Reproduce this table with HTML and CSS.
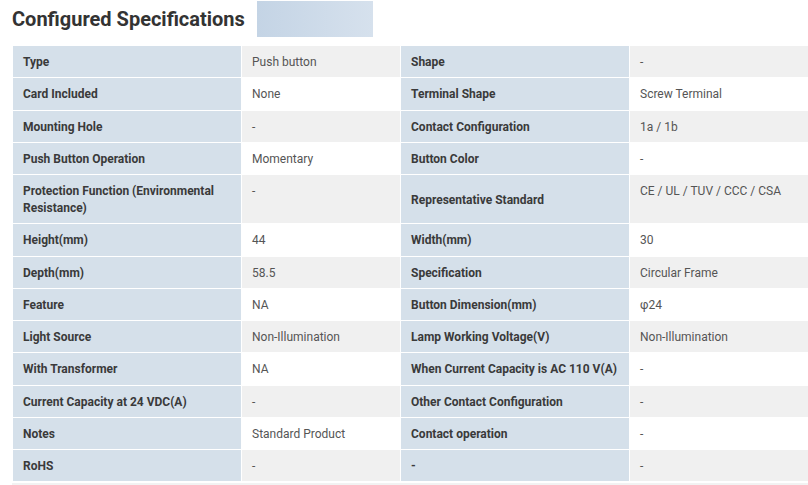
FILE: index.html
```html
<!DOCTYPE html>
<html>
<head>
<meta charset="utf-8">
<link rel="stylesheet" href="styles.css">
</head>
<body>
<div class="page">
  <div class="head">
    <h2 class="title">Configured Specifications</h2>
    <div class="tag"></div>
  </div>
  <table class="spec">
    <colgroup><col class="c1"><col class="c2"><col class="c3"><col class="c4"></colgroup>
    <tr class="odd"><th>Type</th><td>Push button</td><th>Shape</th><td>-</td></tr>
    <tr><th>Card Included</th><td>None</td><th>Terminal Shape</th><td>Screw Terminal</td></tr>
    <tr class="odd"><th>Mounting Hole</th><td>-</td><th>Contact Configuration</th><td>1a / 1b</td></tr>
    <tr><th>Push Button Operation</th><td>Momentary</td><th>Button Color</th><td>-</td></tr>
    <tr class="odd"><th>Protection Function (Environmental Resistance)</th><td>-</td><th>Representative Standard</th><td>CE / UL / TUV / CCC / CSA</td></tr>
    <tr><th>Height(mm)</th><td>44</td><th>Width(mm)</th><td>30</td></tr>
    <tr class="odd"><th>Depth(mm)</th><td>58.5</td><th>Specification</th><td>Circular Frame</td></tr>
    <tr><th>Feature</th><td>NA</td><th>Button Dimension(mm)</th><td>φ24</td></tr>
    <tr class="odd"><th>Light Source</th><td>Non-Illumination</td><th>Lamp Working Voltage(V)</th><td>Non-Illumination</td></tr>
    <tr><th>With Transformer</th><td>NA</td><th>When Current Capacity is AC 110 V(A)</th><td>-</td></tr>
    <tr class="odd"><th>Current Capacity at 24 VDC(A)</th><td>-</td><th>Other Contact Configuration</th><td>-</td></tr>
    <tr><th>Notes</th><td>Standard Product</td><th>Contact operation</th><td>-</td></tr>
    <tr class="odd"><th>RoHS</th><td>-</td><th>-</th><td>-</td></tr>
  </table>
  <div class="next"></div>
</div>
</body>
</html>
```
FILE: styles.css
```css
html, body {
  margin: 0;
  padding: 0;
  background: #fff;
  overflow: hidden;
}
body {
  font-family: Roboto, "Liberation Sans", sans-serif;
  font-size: 12px;
  color: #333;
}
.page {
  width: 808px;
}
.head {
  display: flex;
  align-items: flex-start;
  gap: 12px;
  height: 45px;
  padding-left: 12px;
}
.title {
  margin: 7px 0 0 0;
  font-size: 20px;
  font-weight: 700;
  color: #333;
  line-height: 24px;
}
.tag {
  width: 116px;
  height: 36px;
  margin-top: 1px;
  background: linear-gradient(90deg, #c4d4e5, #d6e1ed);
}
.spec {
  margin-left: 12px;
  border-collapse: separate;
  border-spacing: 1px;
  table-layout: fixed;
  width: 796px;
}
.c1, .c3 { width: 228px; }
.c2 { width: 158px; }
.c4 { width: 178px; }
.spec th, .spec td {
  padding: 8px 10px 6.25px 10px;
  line-height: 17px;
  font-size: 12px;
  text-align: left;
}
.spec th {
  background: #d5e0ea;
  font-weight: 700;
  color: #3a3a3a;
  vertical-align: middle;
}
.spec td {
  background: #fff;
  color: #555;
  vertical-align: top;
}
.spec tr.odd td {
  background: #f0f0f0;
}
.next {
  margin: 1px 0 0 12px;
  height: 4px;
  background: #f2f2f2;
}
```
